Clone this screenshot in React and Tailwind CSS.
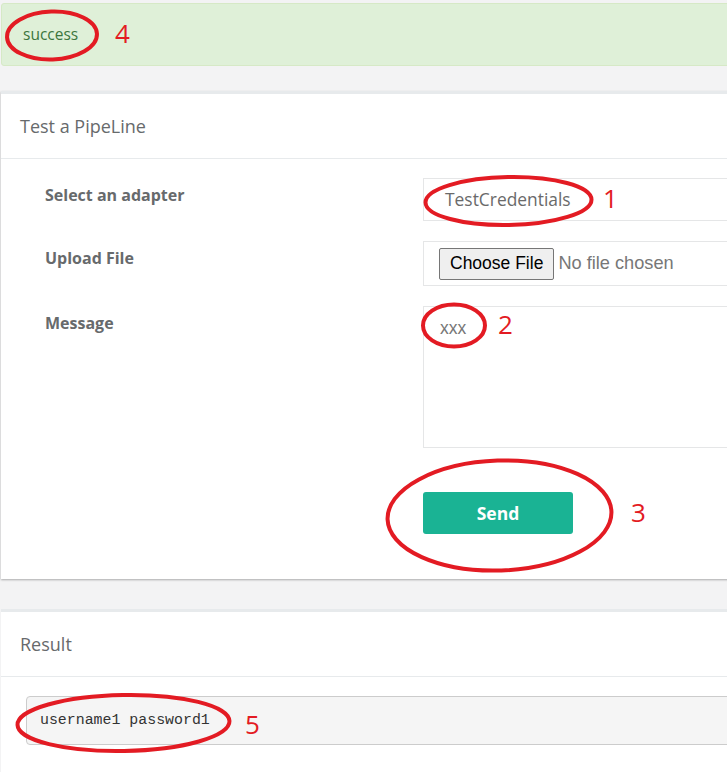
import React from "react";

const RED = "#e31b23";

function Num({ x, y, children }) {
  return (
    <span
      className="absolute text-[26px] leading-none text-[#e31b23]"
      style={{ left: x, top: y, fontFamily: '"Open Sans", sans-serif' }}
    >
      {children}
    </span>
  );
}

export default function App() {
  return (
    <div
      className="relative w-[727px] h-[772px] overflow-hidden bg-[#f3f3f4]"
      style={{ fontFamily: '"Open Sans", sans-serif' }}
    >
      <div className="w-[900px] pl-[1px] pt-[3px]">
        {/* Alert */}
        <div className="h-[63px] bg-[#dff0d8] border border-[#d6e9c6] rounded-[3px] flex items-center px-[21px] text-[15.5px] text-[#3c763d]">
          success
        </div>

        {/* Test panel */}
        <div className="mt-[25px] bg-white border-t-[3px] border-[#e7eaec] shadow-[0_1px_2px_rgba(0,0,0,0.3)]">
          <div className="h-[65px] border-b border-[#e7eaec] flex items-center px-[19px] text-[18px] text-[#676a6c]">
            Test a PipeLine
          </div>
          <div className="pt-[19px] pb-[45px] pl-[44px]">
            <div className="grid grid-cols-[378px_480px] gap-y-[20px]">
              <div className="pt-[7px] text-[16px] font-bold leading-[20px] text-[#676a6c]">
                Select an adapter
              </div>
              <div className="h-[43px] border border-[#e5e6e7] flex items-center pl-[21px] text-[17.4px] text-[#6a6a6a]">
                TestCredentials
              </div>

              <div className="pt-[7px] text-[16px] font-bold leading-[20px] text-[#676a6c]">
                Upload File
              </div>
              <div
                className="h-[45px] border border-[#e5e6e7] flex items-center pl-[15px] text-[17.5px] text-[#777]"
                style={{ fontFamily: '"Liberation Sans", Arial, sans-serif' }}
              >
                <span className="h-[32px] px-[10px] flex items-center bg-[#efefef] border border-[#767676] rounded-[2px] text-black">
                  Choose File
                </span>
                <span className="ml-[4px] text-[18.2px]">No file chosen</span>
              </div>

              <div className="pt-[7px] text-[16px] font-bold leading-[20px] text-[#676a6c]">
                Message
              </div>
              <div
                className="h-[142px] border border-[#e5e6e7] pl-[16px] pt-[10px] text-[17.5px] leading-[22px] text-[#777]"
                style={{ fontFamily: '"Liberation Sans", Arial, sans-serif' }}
              >
                xxx
              </div>

              <div />
              <div className="pt-[24px]">
                <div className="w-[150px] h-[42px] rounded-[3px] bg-[#1ab394] flex items-center justify-center text-white font-bold text-[17.5px]">
                  Send
                </div>
              </div>
            </div>
          </div>
        </div>

        {/* Result panel */}
        <div className="mt-[30px] bg-white border-t-[3px] border-[#e7eaec] h-[200px]">
          <div className="h-[65px] border-b border-[#e7eaec] flex items-center px-[19px] text-[18px] text-[#676a6c]">
            Result
          </div>
          <div className="pt-[19px] pl-[25px]">
            <div
              className="h-[49px] bg-[#f5f5f5] border border-[#cccccc] rounded-[4px] flex items-center pl-[13px] text-[14.9px] text-[#333]"
              style={{ fontFamily: '"Liberation Mono", "DejaVu Sans Mono", monospace' }}
            >
              username1 password1
            </div>
          </div>
        </div>
      </div>

      {/* Annotations */}
      <svg
        className="absolute left-0 top-0 pointer-events-none"
        width="727"
        height="772"
        viewBox="0 0 727 772"
      >
        <g fill="none" stroke={RED} strokeWidth="4">
          <ellipse cx="52" cy="35.5" rx="45" ry="24" transform="rotate(-2 52 35.5)" />
          <ellipse cx="508.5" cy="201" rx="83" ry="24" transform="rotate(-1 508.5 201)" />
          <ellipse cx="454" cy="325.5" rx="31" ry="21" />
          <ellipse cx="499.5" cy="515.5" rx="112" ry="55" transform="rotate(-2 499.5 515.5)" />
          <ellipse cx="123.5" cy="723" rx="106" ry="28" transform="rotate(-1 123.5 723)" />
        </g>
      </svg>
      <Num x={115} y={20}>4</Num>
      <Num x={603} y={185}>1</Num>
      <Num x={498} y={311}>2</Num>
      <Num x={631} y={499}>3</Num>
      <Num x={245} y={711}>5</Num>
    </div>
  );
}
